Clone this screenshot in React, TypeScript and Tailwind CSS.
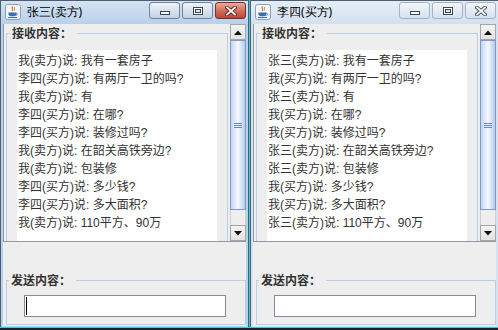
import React from 'react';

type WindowProps = {
  title: string;
  lines: string[];
  active?: boolean;
};

const sellerLines = [
  '我(卖方)说: 我有一套房子',
  '李四(买方)说: 有两厅一卫的吗?',
  '我(卖方)说: 有',
  '李四(买方)说: 在哪?',
  '李四(买方)说: 装修过吗?',
  '我(卖方)说: 在韶关高铁旁边?',
  '我(卖方)说: 包装修',
  '李四(买方)说: 多少钱?',
  '李四(买方)说: 多大面积?',
  '我(卖方)说: 110平方、90万',
];

const buyerLines = [
  '张三(卖方)说: 我有一套房子',
  '我(买方)说: 有两厅一卫的吗?',
  '张三(卖方)说: 有',
  '我(买方)说: 在哪?',
  '我(买方)说: 装修过吗?',
  '张三(卖方)说: 在韶关高铁旁边?',
  '张三(卖方)说: 包装修',
  '我(买方)说: 多少钱?',
  '我(买方)说: 多大面积?',
  '张三(卖方)说: 110平方、90万',
];

function JavaIcon() {
  return (
    <svg width="16" height="16" viewBox="0 0 16 16">
      <rect x="0.5" y="0.5" width="15" height="15" rx="2" fill="#f4f7fb" stroke="#8d9fb5" />
      <path d="M7.5 2.5 C5.8 4 9 5 7.2 7" stroke="#e0712a" strokeWidth="1.2" fill="none" />
      <path d="M9.6 3.2 C8.6 4.6 10.4 5.2 9.2 6.6" stroke="#e0712a" strokeWidth="1" fill="none" />
      <path d="M3.5 8.5 H11 V10.2 C11 11.6 9.6 12.3 7.2 12.3 C4.9 12.3 3.5 11.6 3.5 10.2 Z" fill="#3c6eae" />
      <path d="M11 9.2 C13 9 13 11.2 10.4 11.6" stroke="#3c6eae" strokeWidth="1" fill="none" />
      <path d="M3 13.5 H12" stroke="#3c6eae" strokeWidth="1" />
    </svg>
  );
}

function CaptionButtons({ active }: { active?: boolean }) {
  const plain = active
    ? 'border-[#6f8299] from-[#eef3f9] to-[#c3d3e6]'
    : 'border-[#a3b2c3] from-[#f2f6fa] to-[#d6e1ee]';
  const close = active
    ? 'border-[#7c2f27] from-[#e9aa9c] via-[#d0705f] to-[#c0422f]'
    : plain;
  return (
    <div className="flex gap-[2px] pt-[1px]">
      <div className={`flex h-[17px] w-[31px] items-end justify-center rounded-[3px] border bg-linear-to-b pb-[3px] ${plain}`}>
        <svg width="10" height="4" viewBox="0 0 10 4">
          <rect x="0.5" y="0.5" width="9" height="3" fill="#fff" stroke="#3b4654" />
        </svg>
      </div>
      <div className={`flex h-[17px] w-[31px] items-center justify-center rounded-[3px] border bg-linear-to-b ${plain}`}>
        <svg width="10" height="8" viewBox="0 0 10 8">
          <rect x="0.5" y="0.5" width="9" height="7" fill="#fff" stroke="#3b4654" />
          <rect x="2.5" y="2.5" width="5" height="3" fill="#dfe6ee" stroke="#3b4654" />
        </svg>
      </div>
      <div className={`flex h-[17px] w-[31px] items-center justify-center rounded-[3px] border bg-linear-to-b ${close}`}>
        <svg width="12" height="10" viewBox="0 0 12 10">
          <path d="M2 1.5 L10 8.5 M10 1.5 L2 8.5" stroke={active ? '#5b1f18' : '#3b4654'} strokeWidth="3.6" strokeLinecap="square" />
          <path d="M2 1.5 L10 8.5 M10 1.5 L2 8.5" stroke="#fff" strokeWidth="1.8" strokeLinecap="square" />
        </svg>
      </div>
    </div>
  );
}

function ScrollBar() {
  return (
    <div className="flex w-[16px] shrink-0 flex-col bg-[#eaeaea]">
      <div className="flex h-[16px] items-center justify-center border border-[#a6a6a6] bg-linear-to-b from-[#f4f4f4] to-[#e2e2e2]">
        <svg width="8" height="5" viewBox="0 0 8 5">
          <path d="M0 5 L4 0.5 L8 5 Z" fill="#111" />
        </svg>
      </div>
      <div className="flex h-[170px] items-center justify-center border border-[#7b98cf] bg-linear-to-r from-[#c4d5ee] via-[#f6f9fd] to-[#b6cbe9]">
        <div className="flex w-[8px] flex-col gap-[1px]">
          <div className="h-px bg-[#6b88c0]" />
          <div className="h-px bg-[#6b88c0]" />
          <div className="h-px bg-[#6b88c0]" />
        </div>
      </div>
      <div className="flex-1 border-x border-[#d0d0d0] bg-[#eeeeee]" />
      <div className="flex h-[16px] items-center justify-center border border-[#a6a6a6] bg-linear-to-b from-[#f4f4f4] to-[#e2e2e2]">
        <svg width="8" height="5" viewBox="0 0 8 5">
          <path d="M0 0 L4 4.5 L8 0 Z" fill="#111" />
        </svg>
      </div>
    </div>
  );
}

function ChatWindow({ title, lines, active }: WindowProps) {
  return (
    <div
      className={`flex h-[327px] w-[249px] shrink-0 flex-col border-x border-t border-[#4b5e72] ${
        active ? 'bg-[#b9d1ea]' : 'bg-[#d5e2f0]'
      }`}
    >
      {/* title bar */}
      <div
        className={`flex h-[23px] items-start justify-between bg-linear-to-b pl-[4px] pr-[2px] ${
          active ? 'from-[#d4e3f3] to-[#bad0e9]' : 'from-[#e4edf6] to-[#d3e1ef]'
        }`}
      >
        <div className="flex items-center gap-[6px] pt-[2px]">
          <JavaIcon />
          <span className="text-[12px] leading-[18px] text-black">{title}</span>
        </div>
        <CaptionButtons active={active} />
      </div>

      {/* content */}
      <div className="mx-[2px] flex h-[302px] flex-col bg-[#eeeeee] font-['Noto_Sans_CJK_SC',sans-serif]">
        <div className="flex h-[218px] border-b border-l border-[#8e99a8]">
          <div className="flex-1 overflow-hidden">
            <fieldset className="ml-[2px] mt-[1px] w-[222px] border border-[#b8cfe5] p-0">
              <legend className="ml-[3px] pl-[2px] pr-[5px] text-[12px] font-bold leading-[16px] text-[#333]">
                接收内容：
              </legend>
              <div className="pl-[10px] pt-[9px]">
                <div className="h-[230px] w-[200px] bg-white pl-[1px] pt-[2px] font-['Liberation_Sans','Noto_Sans_CJK_SC',sans-serif] text-[12px] leading-[18px] text-[#333]">
                  {lines.map((line, i) => (
                    <div key={i} className="whitespace-pre">
                      {line}
                    </div>
                  ))}
                </div>
              </div>
            </fieldset>
          </div>
          <ScrollBar />
        </div>

        <fieldset className="ml-[3px] mt-[30px] w-[240px] border border-[#b8cfe5] p-0 pb-[7px]">
          <legend className="ml-[2px] pl-[2px] pr-[5px] text-[12px] font-bold leading-[16px] text-[#333]">
            发送内容：
          </legend>
          <div className="ml-[17px] mt-[7px] flex h-[22px] w-[202px] border border-[#7f8d9c] bg-white">
            {active && <div className="ml-[1px] mt-[1px] h-[18px] w-px bg-black" />}
          </div>
        </fieldset>
      </div>
    </div>
  );
}

export default function App() {
  return (
    <div className="h-[330px] w-[498px] overflow-hidden bg-[#15222d]">
      <div className="flex h-[327px]">
        <ChatWindow title="张三(卖方)" lines={sellerLines} active />
        <div className="w-px shrink-0 bg-[#3ec6e6]" />
        <ChatWindow title="李四(买方)" lines={buyerLines} />
      </div>
      <div className="h-px bg-[#3ec6e6]" />
    </div>
  );
}
